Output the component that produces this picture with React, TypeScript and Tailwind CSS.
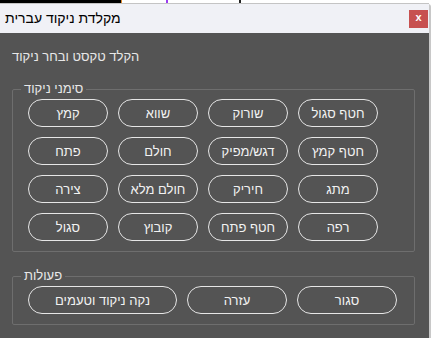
const rows = [
  ["קמץ", "שווא", "שורוק", "חטף סגול"],
  ["פתח", "חולם", "דגש/מפיק", "חטף קמץ"],
  ["צירה", "חולם מלא", "חיריק", "מתג"],
  ["סגול", "קובוץ", "חטף פתח", "רפה"],
];

const actions = [
  { label: "נקה ניקוד וטעמים", w: "w-[149px]" },
  { label: "עזרה", w: "w-[100px]" },
  { label: "סגור", w: "w-[100px]" },
];

const font = { fontFamily: '"Liberation Sans", Arial, sans-serif' };

const PillButton = ({ label, w }: { label: string; w: string }) => (
  <button
    className={`${w} h-[28px] rounded-full border border-[#e6e6e6] bg-transparent text-[13px] text-[#f2f2f2] leading-none`}
  >
    {label}
  </button>
);

export default function App() {
  return (
    <div className="w-[431px] h-[338px] flex flex-col bg-white overflow-hidden" style={font}>
      {/* screen strip above the window */}
      <div className="h-[3px] flex">
        <div className="w-[121px] bg-black" />
        <div className="w-[1px] bg-[#e08a2c]" />
        <div className="w-[44px] bg-white" />
        <div className="w-[2px] bg-[#9b3cf0]" />
        <div className="w-[71px] bg-white" />
        <div className="w-[2px] bg-[#222]" />
        <div className="flex-1 bg-white" />
      </div>
      <div className="h-[1px] bg-[#c4c4c4] mr-[2px]" />

      <div className="flex-1 flex flex-col border-r-2 border-[#c8c8c8] rounded-tr-[3px]">
        {/* title bar */}
        <div className="h-[29px] bg-[#f0f1f6] flex items-center justify-between pl-[5px] pr-[1px]">
          <span className="text-[14px] text-black">מקלדת ניקוד עברית</span>
          <div className="w-[19px] h-[18px] bg-[#c75050] flex items-center justify-center text-white text-[11px] font-bold leading-none pb-[2px]">
            x
          </div>
        </div>

        {/* body */}
        <div className="flex-1 bg-[#545454] pt-[16px] pl-[12px]">
          <div className="text-[13px] leading-[16px] text-[#e8e8e8]">הקלד טקסט ובחר ניקוד</div>

          <fieldset className="mt-[16px] w-[403px] border border-[#6e6e6e] rounded-[2px] pt-[2px] pb-[10px] pl-[15px]">
            <legend className="-ml-[7px] px-[3px] text-[13px] leading-[16px] text-[#e8e8e8]">סימני ניקוד</legend>
            <div className="flex flex-col gap-[10px]">
              {rows.map((row, i) => (
                <div key={i} className="flex gap-[10px]">
                  {row.map((l) => (
                    <PillButton key={l} label={l} w="w-[80px]" />
                  ))}
                </div>
              ))}
            </div>
          </fieldset>

          <fieldset className="mt-[16px] w-[403px] border border-[#6e6e6e] rounded-[2px] pt-[2px] pb-[10px] pl-[15px]">
            <legend className="-ml-[7px] px-[3px] text-[13px] leading-[16px] text-[#e8e8e8]">פעולות</legend>
            <div className="flex gap-[10px]">
              {actions.map((a) => (
                <PillButton key={a.label} label={a.label} w={a.w} />
              ))}
            </div>
          </fieldset>
        </div>
      </div>
    </div>
  );
}
